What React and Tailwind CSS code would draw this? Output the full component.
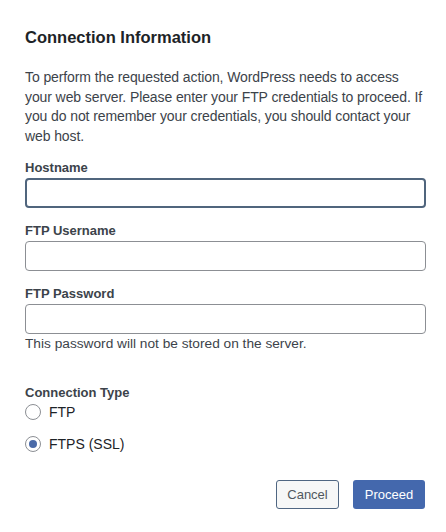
export default function App() {
  return (
    <div className="w-[446px] h-[532px] bg-white text-[#1d2327] font-['Liberation_Sans',sans-serif] pl-[25px] pr-[20px] pt-[26px]">
      <h1 className="text-[16.5px] font-bold leading-[22px] text-[#1d2327]">Connection Information</h1>

      <p className="mt-[20px] text-[14px] leading-[19.5px] text-[#3c434a] whitespace-nowrap tracking-[-0.1px]">
        To perform the requested action, WordPress needs to access
        <br />
        your web server. Please enter your FTP credentials to proceed. If
        <br />
        you do not remember your credentials, you should contact your
        <br />
        web host.
      </p>

      <form className="mt-[13px]">
        {/* Hostname */}
        <label className="block text-[13px] font-bold leading-[18px] text-[#3c434a]">Hostname</label>
        <input
          type="text"
          className="mt-[1px] block w-full h-[30px] rounded-[4px] border-2 border-[#50657d] bg-white outline-none"
        />

        {/* Username */}
        <label className="mt-[14px] block text-[13px] font-bold leading-[18px] text-[#3c434a]">FTP Username</label>
        <input
          type="text"
          className="mt-[1px] block w-full h-[30px] rounded-[4px] border border-[#8c8f94] bg-white outline-none"
        />

        {/* Password */}
        <label className="mt-[14px] block text-[13px] font-bold leading-[18px] text-[#3c434a]">FTP Password</label>
        <input
          type="password"
          className="mt-[1px] block w-full h-[30px] rounded-[4px] border border-[#8c8f94] bg-white outline-none"
        />
        <p className="text-[13.7px] leading-[19px] text-[#3c434a]">This password will not be stored on the server.</p>

        {/* Connection type */}
        <div className="mt-[31px] text-[13px] font-bold leading-[18px] text-[#3c434a]">Connection Type</div>
        <div className="mt-[1px] flex items-center gap-[8px] h-[18px]">
          <span className="w-[16px] h-[16px] rounded-full border border-[#8c8f94] bg-white" />
          <span className="text-[14px] text-[#1d2327]">FTP</span>
        </div>
        <div className="mt-[14px] flex items-center gap-[8px] h-[18px]">
          <span className="w-[16px] h-[16px] rounded-full border border-[#8c8f94] bg-white flex items-center justify-center">
            <span className="w-[8px] h-[8px] rounded-full bg-[#4a6aa8]" />
          </span>
          <span className="text-[14px] text-[#1d2327]">FTPS (SSL)</span>
        </div>

        {/* Buttons */}
        <div className="mt-[27px] flex justify-end gap-[14px] pr-[1px]">
          <button
            type="button"
            className="w-[63px] h-[29px] rounded-[3px] border border-[#4f6682] bg-[#f6f7f7] text-[13px] text-[#50575e]"
          >
            Cancel
          </button>
          <button
            type="button"
            className="w-[72px] h-[29px] rounded-[3px] bg-[#4468ad] text-[13px] text-white"
          >
            Proceed
          </button>
        </div>
      </form>
    </div>
  );
}
